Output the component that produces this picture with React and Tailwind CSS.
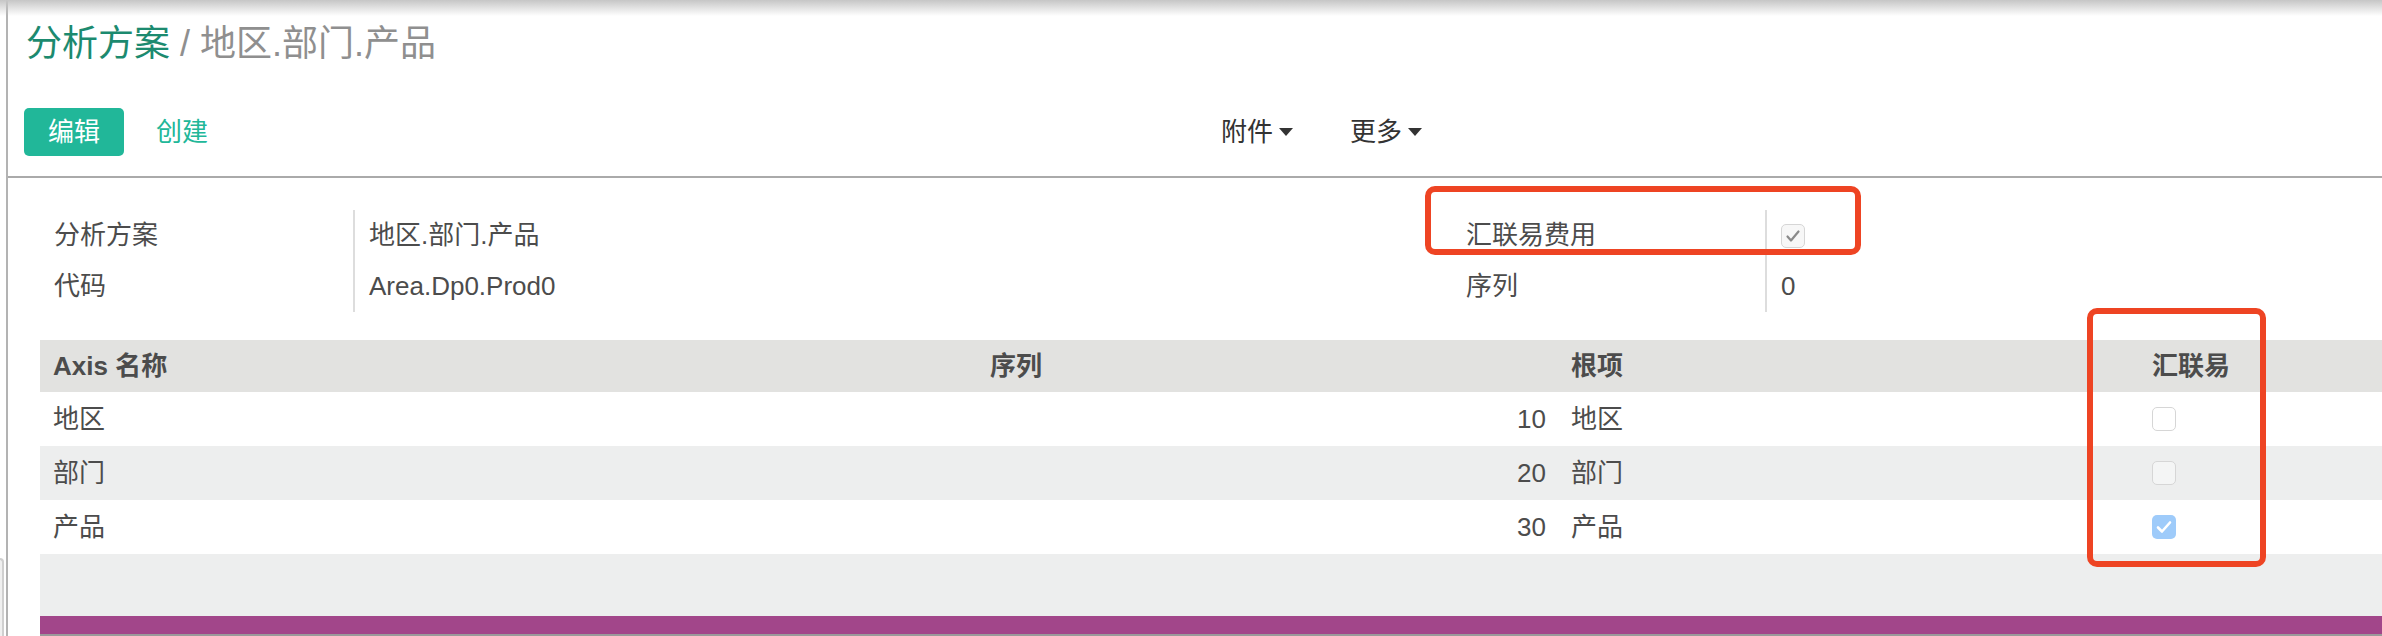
import React from "react";

const font = "font-['Liberation_Sans','Noto_Sans_CJK_SC',sans-serif]";

const lines = [
  { name: "地区", seq: 10, root: "地区", flag: false },
  { name: "部门", seq: 20, root: "部门", flag: false },
  { name: "产品", seq: 30, root: "产品", flag: true },
];

function Caret() {
  return (
    <svg width="14" height="8" viewBox="0 0 14 8" className="ml-[6px]">
      <path d="M0 0h14L7 8z" fill="#333" />
    </svg>
  );
}

function Check({ checked, readOnly, striped }) {
  if (checked && !readOnly) {
    return (
      <div className="w-[24px] h-[24px] rounded-[5px] bg-[#9ecbfa] flex items-center justify-center">
        <svg width="16" height="14" viewBox="0 0 16 14">
          <path d="M2 7.5l4 4L14 2.5" fill="none" stroke="white" strokeWidth="2.6" strokeLinecap="round" strokeLinejoin="round" />
        </svg>
      </div>
    );
  }
  return (
    <div
      className={`w-[24px] h-[24px] rounded-[5px] border border-[#d6d6d6] flex items-center justify-center ${
        readOnly ? "bg-[#f7f7f7]" : striped ? "bg-[#f4f5f5]" : "bg-white"
      }`}
    >
      {checked && (
        <svg width="16" height="14" viewBox="0 0 16 14">
          <path d="M2.5 7.5l3.5 4L13.5 2.5" fill="none" stroke="#8a8a8a" strokeWidth="2.2" strokeLinecap="round" strokeLinejoin="round" />
        </svg>
      )}
    </div>
  );
}

function FieldRow({ label, children }) {
  return (
    <div className="flex h-[51px]">
      <div className="w-[315px] px-[14px] flex items-center border-r-2 border-[#dddddd]">{label}</div>
      <div className="pl-[14px] flex items-center">{children}</div>
    </div>
  );
}

export default function App() {
  return (
    <div className={`relative w-[2382px] h-[636px] overflow-hidden bg-white text-[#4c4c4c] text-[26px] ${font}`}>
      <div className="absolute inset-x-0 top-0 h-[16px] bg-gradient-to-b from-[#c6c6c6] to-white/0" />
      <div className="absolute left-0 top-[558px] w-[4px] h-[80px] bg-[#f0f0f0] border-t-2 border-r-2 border-[#d0d0d0] rounded-tr-[6px]" />

      <div className="ml-[6px] h-full border-l-2 border-[#b3b3b3]">
        {/* control panel */}
        <div className="border-b-2 border-[#aaaaaa] pl-[16px] pt-[24px] pb-[20px]">
          <h1 className="text-[36px] leading-[40px] font-normal pl-[2px]">
            <span className="text-[#1c8a6f]">分析方案</span>
            <span className="text-[#8f8f8f]"> / 地区.部门.产品</span>
          </h1>
          <div className="mt-[44px] flex items-center h-[48px]">
            <div className="w-[1197px] flex items-center">
              <button className="h-[48px] px-[24px] rounded-[5px] bg-[#21b799] text-white text-[26px]">
                编辑
              </button>
              <button className="ml-[32px] text-[26px] text-[#21b799]">创建</button>
            </div>
            <div className="flex items-center text-[#333333]">
              <span className="flex items-center">附件<Caret /></span>
              <span className="flex items-center ml-[57px]">更多<Caret /></span>
            </div>
          </div>
        </div>

        {/* sheet */}
        <div className="pl-[32px] pt-[32px]">
          <div className="flex">
            <div className="w-[1412px]">
              <FieldRow label="分析方案">地区.部门.产品</FieldRow>
              <FieldRow label="代码">Area.Dp0.Prod0</FieldRow>
            </div>
            <div className="flex-1">
              <FieldRow label="汇联易费用">
                <Check checked readOnly />
              </FieldRow>
              <FieldRow label="序列">0</FieldRow>
            </div>
          </div>

          <div className="mt-[28px]">
            <div className="grid grid-cols-[937px_581px_581px_1fr] h-[52px] items-center bg-[#e2e2e0] font-bold">
              <div className="px-[13px]">Axis 名称</div>
              <div className="px-[13px]">序列</div>
              <div className="px-[13px]">根项</div>
              <div className="px-[13px]">汇联易</div>
            </div>
            {lines.map((l, i) => (
              <div
                key={l.name}
                className={`grid grid-cols-[937px_581px_581px_1fr] h-[54px] items-center ${
                  i % 2 === 1 ? "bg-[#edeeee]" : "bg-white"
                }`}
              >
                <div className="px-[13px]">{l.name}</div>
                <div className="px-[12px] text-right">{l.seq}</div>
                <div className="px-[13px]">{l.root}</div>
                <div className="px-[13px]">
                  <Check checked={l.flag} striped={i % 2 === 1} />
                </div>
              </div>
            ))}
            <div className="h-[62px] bg-[#edeeee]" />
            <div className="h-[20px] bg-[#a2468a] border-b-2 border-[#9a9a9a]" />
          </div>
        </div>
      </div>

      {/* annotation boxes */}
      <div className="absolute left-[1425px] top-[186px] w-[436px] h-[69px] border-[6px] border-[#ee4423] rounded-[10px]" />
      <div className="absolute left-[2087px] top-[308px] w-[179px] h-[259px] border-[6px] border-[#ee4423] rounded-[10px]" />
    </div>
  );
}
